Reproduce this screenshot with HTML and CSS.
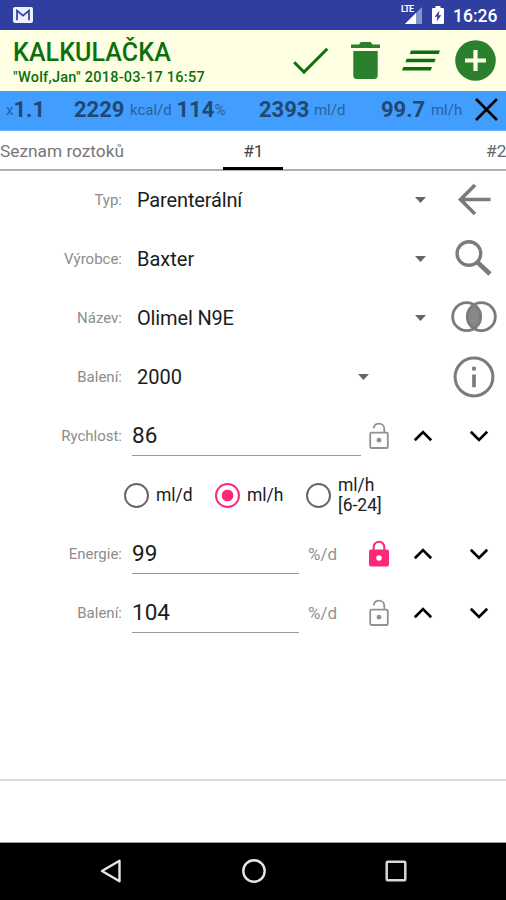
FILE: index.html
```html
<!DOCTYPE html>
<html lang="cs">
<head>
<meta charset="utf-8">
<title>Kalkulačka</title>
<link rel="stylesheet" href="styles.css">
</head>
<body>
<svg class="defs" aria-hidden="true">
  <symbol id="caret" viewBox="0 0 11 6"><path d="M0 0H11L5.5 6Z" fill="#666"/></symbol>
  <symbol id="up" viewBox="0 0 20 12"><path d="M1.8 10.3 10 2.1 18.2 10.3" fill="none" stroke="#000" stroke-width="2.7"/></symbol>
  <symbol id="down" viewBox="0 0 20 12"><path d="M1.8 1.7 10 9.9 18.2 1.7" fill="none" stroke="#000" stroke-width="2.7"/></symbol>
  <symbol id="unlocked" viewBox="0 0 20 28"><g fill="none" stroke="#929292" stroke-width="1.8"><rect x="1.2" y="10.6" width="17.6" height="15.4" rx="1.3"/><path d="M4.6 6.3C5.2 3.2 7.3 1.7 10 1.7c3 0 5.3 2.2 5.3 5.3v3.6"/></g><circle cx="10" cy="18.2" r="2.4" fill="#929292"/></symbol>
  <symbol id="locked" viewBox="0 0 20 28"><rect x="0" y="9.6" width="20" height="17" rx="2" fill="#ff2878"/><path d="M4.7 10V7a5.3 5.3 0 0 1 10.6 0v3" fill="none" stroke="#ff2878" stroke-width="2"/><circle cx="10" cy="18" r="2.7" fill="#fff"/></symbol>
</svg>
<div class="phone">
  <div class="status">
    <svg class="mail" width="20" height="16" viewBox="0 0 20 16"><rect width="20" height="16" rx="2" fill="#eef0fb"/><path d="M4 13.2V3.6L10 8.6l6-5V13.2" fill="none" stroke="#303f9f" stroke-width="1.7"/></svg>
    <div class="signal"><span class="lte">LTE</span><svg width="18" height="17" viewBox="0 0 18 17"><path d="M17 0V17H0Z" fill="#8791ca"/><path d="M11 6V17H0Z" fill="#fff"/></svg></div>
    <svg class="battery" width="12" height="18" viewBox="0 0 12 18"><path d="M3.5 0h5v2H11q1 0 1 1v14q0 1-1 1H1q-1 0-1-1V3q0-1 1-1h2.500Z" fill="#fff"/><path d="M7.400 4.500 2.700 10.700h2.700L4.600 15.500l4.700-6.300H6.600Z" fill="#303f9f"/></svg>
    <span class="clock">16:26</span>
  </div>
  <header class="bar">
    <div class="titles"><h1>KALKULAČKA</h1><p>"Wolf,Jan" 2018-03-17 16:57</p></div>
    <svg class="check" width="36" height="28" viewBox="0 0 36 28"><path d="M1.200 15.300 11 25.100 34.300 1.800" fill="none" stroke="#0a750c" stroke-width="3"/></svg>
    <svg class="trash" width="30" height="38" viewBox="0 0 30 38"><path d="M0 2.500h8L9.800 0h9.800l1.800 2.500H29V6H0ZM2.300 9H26.700V33.500a3.500 3.500 0 0 1-3.500 3.500H5.800a3.500 3.500 0 0 1-3.500-3.500Z" fill="#2b802e"/></svg>
    <svg class="lines" width="38" height="21" viewBox="0 0 38 21"><path d="M9 .4H38l-1.300 3.500H7.700ZM4.700 8.700h29L32.400 12.200h-29ZM1.300 17H30l-1.300 3.500H0Z" fill="#0a700c"/></svg>
    <svg class="plus" width="41" height="41" viewBox="0 0 41 41"><circle cx="20.500" cy="20.500" r="20.300" fill="#2b802e"/><path d="M20.500 10v21M10 20.500h21" stroke="#ffffe4" stroke-width="4.200"/></svg>
  </header>
  <div class="summary">
    <span class="unit factor">x</span><b class="n1">1.1</b>
    <b class="n2">2229</b><span class="unit u2">kcal/d</span><b class="n3">114</b><span class="unit pct">%</span>
    <b class="n4">2393</b><span class="unit u4">ml/d</span>
    <b class="n5">99.7</b><span class="unit u5">ml/h</span>
    <svg class="close" width="23" height="23" viewBox="0 0 22 22"><path d="M1 1 21 21M21 1 1 21" stroke="#000" stroke-width="2.500"/></svg>
  </div>
  <nav class="tabs"><span class="tab">Seznam roztoků</span><span class="tab active">#1</span><span class="tab last">#2</span></nav>
  <main>
    <div class="row"><label>Typ:</label><div class="select"><span class="v1">Parenterální</span><svg class="caret"><use href="#caret"/></svg></div>
      <div class="action"><svg width="48" height="48" viewBox="0 0 48 48"><path d="M25 9 10.500 23.500 25 38M10.500 23.500H40.500" fill="none" stroke="#7b7b7b" stroke-width="3.600"/></svg></div></div>
    <div class="row"><label>Výrobce:</label><div class="select"><span class="v2">Baxter</span><svg class="caret"><use href="#caret"/></svg></div>
      <div class="action"><svg width="48" height="48" viewBox="0 0 48 48"><circle cx="18.900" cy="18.500" r="11.800" fill="none" stroke="#7b7b7b" stroke-width="3.400"/><path d="M27.200 27 40 39" stroke="#7b7b7b" stroke-width="4.600"/></svg></div></div>
    <div class="row"><label>Název:</label><div class="select"><span class="v3">Olimel N9E</span><svg class="caret"><use href="#caret"/></svg></div>
      <div class="action"><svg width="48" height="48" viewBox="0 0 48 48"><path d="M24 10.500a14 14 0 0 1 0 24.500 14 14 0 0 1 0-24.500Z" fill="#888"/><g fill="none" stroke="#7b7b7b" stroke-width="2.800"><circle cx="16.700" cy="22.700" r="14"/><circle cx="31.300" cy="22.700" r="14"/></g></svg></div></div>
    <div class="row"><label>Balení:</label><div class="select short"><span class="v4">2000</span><svg class="caret"><use href="#caret"/></svg></div>
      <div class="action"><svg width="48" height="48" viewBox="0 0 48 48"><circle cx="24" cy="24" r="18.900" fill="none" stroke="#7b7b7b" stroke-width="3"/><path d="M24 21.500V34.200M24 13.700V17.400" stroke="#7b7b7b" stroke-width="3.700"/></svg></div></div>
    <div class="row"><label>Rychlost:</label><div class="field wide">86</div><svg class="lock"><use href="#unlocked"/></svg><svg class="chev"><use href="#up"/></svg><svg class="chev next"><use href="#down"/></svg></div>
    <div class="row radios">
      <div class="option"><i class="dot"></i><span>ml/d</span></div>
      <div class="option"><i class="dot on"></i><span>ml/h</span></div>
      <div class="option"><i class="dot"></i><span class="two">ml/h<br>[6-24]</span></div>
    </div>
    <div class="row"><label>Energie:</label><div class="field">99</div><span class="per">%/d</span><svg class="lock"><use href="#locked"/></svg><svg class="chev"><use href="#up"/></svg><svg class="chev next"><use href="#down"/></svg></div>
    <div class="row"><label>Balení:</label><div class="field">104</div><span class="per">%/d</span><svg class="lock"><use href="#unlocked"/></svg><svg class="chev"><use href="#up"/></svg><svg class="chev next"><use href="#down"/></svg></div>
  </main>
  <div class="footer"></div>
  <div class="nav">
    <svg width="24" height="26" viewBox="0 0 24 26"><path d="M3 13 20.500 2.800V23.200Z" fill="none" stroke="#e6e6e6" stroke-width="2.400" stroke-linejoin="round"/></svg>
    <svg width="24" height="26" viewBox="0 0 24 26"><circle cx="12" cy="13" r="10.700" fill="none" stroke="#e6e6e6" stroke-width="2.400"/></svg>
    <svg width="24" height="26" viewBox="0 0 24 26"><rect x="2.700" y="3.700" width="18.600" height="18.600" rx="1" fill="none" stroke="#d8d8d8" stroke-width="2.500"/></svg>
  </div>
</div>
</body>
</html>
```
FILE: styles.css
```css
* { box-sizing: border-box; }
body { margin: 0; background: #fff; font-family: Roboto, "Noto Sans", sans-serif; color: #1c1c1c; }
svg { display: block; flex: none; }
.defs { position: absolute; width: 0; height: 0; }
.phone { width: 506px; height: 900px; display: flex; flex-direction: column; overflow: hidden; white-space: nowrap; }

.status { height: 30px; flex: none; background: #303f9f; color: #fff; display: flex; align-items: center; padding: 0 9px 0 13px; }
.mail { margin-right: auto; }
.signal { display: flex; position: relative; width: 22px; height: 18px; justify-content: flex-end; align-items: flex-end; margin-right: 9px; }
.lte { position: absolute; left: 0; top: -1px; font-size: 9px; line-height: 9px; font-weight: 700; letter-spacing: -.7px; }
.battery { margin-right: 9px; }
.clock { font-size: 17.500px; font-weight: 500; line-height: 30px; width: 44px; padding-top: 1px; }

.bar { height: 61px; flex: none; background: #ffffe4; color: #0a700c; display: flex; align-items: center; padding: 0 10px 0 13px; }
.titles { width: 280px; }
h1 { margin: 0; font-size: 25px; line-height: 30px; font-weight: 500; padding-top: 4px; letter-spacing: .1px; }
p { margin: 0; font-size: 14.500px; line-height: 20px; font-weight: 500; letter-spacing: .25px; }
.trash { margin-left: 22px; }
.lines { margin-left: 21px; }
.plus { margin-left: 15px; }

.summary { height: 40px; flex: none; background: #419eff; color: #24476f; display: flex; align-items: center; padding: 0 0 2px 6px; border-bottom: 1px solid #6cb3fb; }
.summary b { font-size: 22px; font-weight: 700; }
.unit { font-size: 15px; color: #2c609b; }
.n1 { width: 60.500px; }
.n2 { width: 56px; }
.u2 { width: 46.500px; }
.n3 { width: 38px; }
.pct { width: 44.500px; }
.n4 { width: 55px; }
.u4 { width: 67px; }
.n5 { width: 50px; }
.u5 { width: 44px; }

.tabs { height: 40px; flex: none; display: flex; justify-content: space-between; border-bottom: 2px solid #b0b0b0; font-size: 17.300px; line-height: 41px; color: #777; }
.tab { width: 125px; height: 39px; }
.active { width: 60px; height: 39px; margin-left: 98.400px; margin-right: auto; text-align: center; color: #444; border-bottom: 3px solid #000; }
.last { width: 20px; color: #666; }

main { margin-top: -1px; }
.row { height: 59px; display: flex; align-items: center; }
label { width: 122px; text-align: right; font-size: 15px; color: #8c8c8c; padding-top: 1px; }
.select { width: 289px; margin-left: 15px; display: flex; justify-content: space-between; align-items: center; font-size: 20px; }
.select span { padding-top: 1px; }
.v1, .v3 { letter-spacing: -.15px; }
.short { width: 232px; margin-right: 57px; }
.caret { width: 11px; height: 6px; }
.action { width: 48px; margin-left: 24.200px; }
.field { width: 167px; height: 41px; margin-left: 10px; border-bottom: 1px solid #9a9a9a; font-size: 22.500px; line-height: 41px; }
.wide { width: 229px; margin-right: 8px; }
.per { width: 61px; margin-left: 9px; font-size: 17px; color: #929292; }
.lock { width: 20px; height: 28px; }
.chev { width: 20px; height: 12px; margin-left: 23.500px; }
.next { margin-left: 36px; }
.radios { padding: 1px 0 0 124px; }
.option { width: 91px; display: flex; align-items: center; gap: 7px; font-size: 17.500px; line-height: 20px; }
.dot { width: 25px; height: 25px; flex: none; border: 2px solid #666; border-radius: 50%; }
.on { border-color: #ff2878; background: radial-gradient(circle, #ff2878 5.500px, #fff 6.200px); }

.footer { height: 64px; flex: none; margin-top: auto; border-top: 2px solid #d8d8d8; border-bottom: 1px solid #999; }
.nav { height: 57px; flex: none; background: #000; display: flex; justify-content: space-between; align-items: center; padding: 0 98px 2px 99px; }
```
